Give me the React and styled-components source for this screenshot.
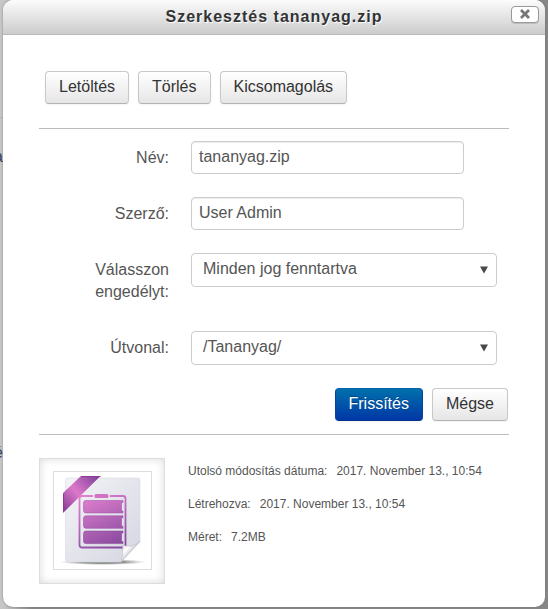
import React from "react";
import styled, { createGlobalStyle, css } from "styled-components";

const GlobalStyle = createGlobalStyle`
  *, *::before, *::after { box-sizing: border-box; }
  body {
    margin: 0;
    background: linear-gradient(to right, #c6c6c6 0, #c6c6c6 4px, #868686 32px);
    color: #555;
    font: 16px/22px "Liberation Sans", Arial, sans-serif;
  }
  button, input, select { font: inherit; }
`;

const Page = styled.div`
  position: relative;
  padding: 0 3px 2px;
`;

const Backdrop = styled.div`
  position: absolute;
  inset: 0 auto 0 0;
  width: 3px;
  overflow: hidden;
  display: flex;
  flex-direction: column;
  align-items: flex-end;
  color: #36415a;
`;

const BackdropRow = styled.span`
  padding-top: ${(p) => (p.$first ? "28px" : "0")};
  margin-top: ${(p) => (p.$first ? "117px" : "274px")};
  border-top: ${(p) => (p.$first ? "1px solid #b4b4b4" : "0")};
`;

const Dialog = styled.section`
  position: relative;
  background: #fff;
  border-radius: 10px;
  overflow: hidden;
  box-shadow: 0 0 2px #777;
`;

const Header = styled.header`
  display: grid;
  grid-template-columns: 36px 1fr 36px;
  align-items: center;
  height: 35px;
  border-bottom: 1px solid #bbb;
  background: linear-gradient(#fcfcfc, #ccc);
`;

const Title = styled.h1`
  grid-column: 2;
  margin: 0;
  color: #333;
  font-size: 16px;
  line-height: 22px;
  letter-spacing: 1px;
  text-align: center;
  text-shadow: 1px 1px 1px #fff;
`;

const CloseButton = styled.button`
  display: grid;
  place-items: center;
  width: 28px;
  height: 17px;
  margin-bottom: 6px;
  margin-left: 2px;
  padding: 0;
  border: 1px solid #999;
  border-radius: 4px;
  background: #fff;
  box-shadow: 0 1px 1px rgba(0, 0, 0, 0.15);
`;

const Body = styled.div`
  padding: 36px 36px 23px;
`;

const Toolbar = styled.div`
  display: flex;
  gap: 9px;
  padding: 0 6px 24px;
`;

const Button = styled.button`
  height: 33px;
  padding: 0 13px 2px;
  border: 1px solid #c8c8c8;
  border-bottom-color: #b3b3b3;
  border-radius: 4px;
  background: linear-gradient(#fff, #e6e6e6);
  color: #333;
  box-shadow: 0 1px 2px rgba(0, 0, 0, 0.05);
  ${(p) =>
    p.$primary &&
    css`
      border-color: #0a62a8 #0a42a0 #04318f;
      background: linear-gradient(#0070ad, #0037a5);
      color: #fff;
      text-shadow: 0 -1px 0 rgba(0, 0, 0, 0.25);
    `}
`;

const Form = styled.form`
  padding: 12px 12px 13px 0;
  border: solid #bbb;
  border-width: 1px 0;
`;

const Field = styled.div`
  display: grid;
  grid-template-columns: 130px 1fr;
  column-gap: 22px;
  align-items: start;
  margin-bottom: 23px;
`;

const Label = styled.label`
  padding: 6px 0 5px;
  text-align: right;
`;

const controlLook = css`
  width: 100%;
  height: 33px;
  border: 1px solid #ccc;
  border-radius: 4px;
  background: #fff;
  color: #555;
`;

const TextInput = styled.input`
  ${controlLook}
  max-width: calc(100% - 33px);
  padding: 0 7px 2px;
  box-shadow: inset 0 1px 1px rgba(0, 0, 0, 0.075);
`;

const SelectBox = styled.div`
  display: grid;
  align-items: center;

  > * { grid-area: 1 / 1; }
  > svg { justify-self: end; margin-right: 9px; pointer-events: none; }
`;

const Select = styled.select`
  ${controlLook}
  height: 34px;
  appearance: none;
  padding: 0 24px 2px 11px;
`;

const Actions = styled.div`
  display: flex;
  justify-content: flex-end;
  gap: 9px;
  margin-right: -11px;
`;

const Summary = styled.div`
  display: flex;
  gap: 23px;
  padding-top: 23px;
`;

const Thumbnail = styled.div`
  flex: none;
  padding: 12px 12px 13px 13px;
  border: 1px solid #ddd;
  box-shadow: inset 0 0 8px rgba(0, 0, 0, 0.15);

  svg { display: block; border: 1px solid #ddd; background: #fff; }
`;

const Details = styled.dl`
  margin: 0;
  padding-top: 2px;
  font-size: 12px;
`;

const Detail = styled.div`
  display: flex;
  gap: 9px;
  margin-bottom: 11px;

  dd { margin: 0; }
`;

const CloseIcon = () => (
  <svg width="10" height="10" viewBox="0 0 10 10" aria-hidden="true">
    <path d="M1 1 9 9M9 1 1 9" stroke="#777" strokeWidth="2.8" />
  </svg>
);

const Arrow = () => (
  <svg width="8" height="8" viewBox="0 0 8 8" aria-hidden="true">
    <path d="M0 0.5h8L4 7.5z" fill="#484848" />
  </svg>
);

const bar = (y) =>
  `M32 ${y}H69V${y + 2}H67.5V${y + 10.5}H69V${y + 12.5}H32Q29.5 ${y + 12.5} 29.5 ${y + 10}V${y + 2.5}Q29.5 ${y} 32 ${y}Z`;

const ArchiveIcon = () => (
  <svg width="99" height="99" viewBox="0 0 97 97" role="img" aria-label="ZIP">
    <defs>
      <linearGradient id="sheet" x1="0" y1="0" x2="1" y2="1">
        <stop offset="0" stopColor="#f4f4f7" />
        <stop offset="1" stopColor="#d4d6e1" />
      </linearGradient>
      <linearGradient id="violet" gradientUnits="userSpaceOnUse" x1="34" y1="24" x2="58" y2="76">
        <stop offset="0" stopColor="#df7fce" />
        <stop offset="1" stopColor="#884a9e" />
      </linearGradient>
      <linearGradient id="ribbon" gradientUnits="userSpaceOnUse" x1="9" y1="36" x2="43" y2="5">
        <stop offset="0" stopColor="#8b3f96" />
        <stop offset="0.45" stopColor="#dd78cb" />
        <stop offset="1" stopColor="#83449c" />
      </linearGradient>
      <linearGradient id="curl" gradientUnits="userSpaceOnUse" x1="68" y1="72" x2="78" y2="81">
        <stop offset="0" stopColor="#d9dae3" />
        <stop offset="0.5" stopColor="#fff" />
        <stop offset="1" stopColor="#c3c4cc" />
      </linearGradient>
      <radialGradient id="shade">
        <stop offset="0.5" stopColor="#777" stopOpacity="0.8" />
        <stop offset="1" stopColor="#999" stopOpacity="0" />
      </radialGradient>
    </defs>
    <ellipse cx="49" cy="90" rx="43" ry="3" fill="url(#shade)" />
    <path d="M14 6H84Q86 6 86 8V70L67 90H14Q11.5 90 11.5 87V8Q11.5 6 14 6Z" fill="url(#sheet)" stroke="#d3d4dc" strokeWidth="0.5" />
    <path
      d="M39 24H28Q25.500 24 25.500 26.500V73Q25.500 75.500 28 75.500H69Q71.500 75.500 71.500 73V26.500Q71.500 24 69 24H56"
      fill="none"
      stroke="url(#violet)"
      strokeWidth="1.8"
    />
    <rect x="40.5" y="22" width="14" height="4" rx="1.5" fill="#d371c5" />
    <g fill="url(#violet)">
      <path d={bar(28.5)} stroke="#a758ae" strokeWidth="0.6" />
      <path d={bar(43.8)} stroke="#9f51a9" strokeWidth="0.6" />
      <path d={bar(59.1)} stroke="#8b4a9c" strokeWidth="0.6" />
    </g>
    <path d="M67 90Q70 82 68.5 73Q78 77 86 69Z" fill="url(#curl)" stroke="#b9bac3" strokeWidth="0.5" />
    <path d="M27 4H46.5L9 41V21Z" fill="url(#ribbon)" />
    <path d="M27 4.500H46.500M9.500 22V40" stroke="#8b3b92" strokeWidth="1" />
  </svg>
);

const details = [
  ["Utolsó módosítás dátuma:", "2017. November 13., 10:54"],
  ["Létrehozva:", "2017. November 13., 10:54"],
  ["Méret:", "7.2MB"],
];

export default function App() {
  return (
    <Page>
      <GlobalStyle />
      <Backdrop aria-hidden="true">
        <BackdropRow $first>a</BackdropRow>
        <BackdropRow>é</BackdropRow>
      </Backdrop>
      <Dialog role="dialog" aria-labelledby="dialog-title">
        <Header>
          <Title id="dialog-title">Szerkesztés tananyag.zip</Title>
          <CloseButton type="button" aria-label="Bezárás">
            <CloseIcon />
          </CloseButton>
        </Header>
        <Body>
          <Toolbar>
            <Button type="button">Letöltés</Button>
            <Button type="button">Törlés</Button>
            <Button type="button">Kicsomagolás</Button>
          </Toolbar>
          <Form onSubmit={(e) => e.preventDefault()}>
            <Field>
              <Label htmlFor="name">Név:</Label>
              <TextInput id="name" defaultValue="tananyag.zip" />
            </Field>
            <Field>
              <Label htmlFor="author">Szerző:</Label>
              <TextInput id="author" defaultValue="User Admin" />
            </Field>
            <Field>
              <Label htmlFor="license">Válasszon engedélyt:</Label>
              <SelectBox>
                <Select id="license">
                  <option>Minden jog fenntartva</option>
                </Select>
                <Arrow />
              </SelectBox>
            </Field>
            <Field>
              <Label htmlFor="path">Útvonal:</Label>
              <SelectBox>
                <Select id="path">
                  <option>/Tananyag/</option>
                </Select>
                <Arrow />
              </SelectBox>
            </Field>
            <Actions>
              <Button $primary type="submit">Frissítés</Button>
              <Button type="button">Mégse</Button>
            </Actions>
          </Form>
          <Summary>
            <Thumbnail>
              <ArchiveIcon />
            </Thumbnail>
            <Details>
              {details.map(([term, value]) => (
                <Detail key={term}>
                  <dt>{term}</dt>
                  <dd>{value}</dd>
                </Detail>
              ))}
            </Details>
          </Summary>
        </Body>
      </Dialog>
    </Page>
  );
}
